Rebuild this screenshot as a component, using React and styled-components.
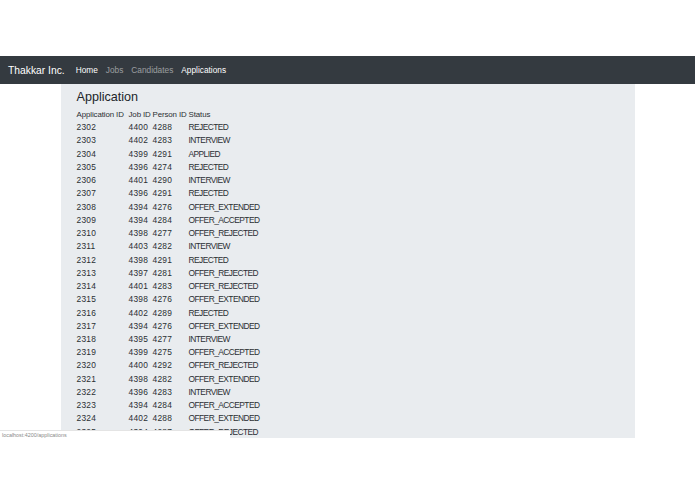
import React from "react";
import styled, { createGlobalStyle } from "styled-components";

const Global = createGlobalStyle`
  html, body { margin: 0; padding: 0; background: #fff; }
  body { font-family: "Liberation Sans", Arial, sans-serif; color: #212529; }
`;

const Page = styled.div`
  position: relative;
  width: 695px;
  height: 494px;
  padding-top: 56px;
  box-sizing: border-box;
  overflow: hidden;
`;

const NavBar = styled.nav`
  height: 28px;
  background: #343a40;
  display: flex;
  align-items: center;
  padding-left: 8px;
`;

const Brand = styled.span`
  color: #fff;
  font-size: 10.3px;
  margin-right: 7px;
`;

const NavLink = styled.span`
  font-size: 8.3px;
  padding: 0 4px;
  color: ${(p) => (p.$muted ? "rgba(255,255,255,0.5)" : "#fff")};
`;

const Panel = styled.main`
  width: 574px;
  height: 354px;
  margin: 0 auto;
  background: #e9ecef;
  padding: 4px 16px 0;
  box-sizing: border-box;
  overflow: hidden;
`;

const Heading = styled.h3`
  margin: 0 0 1px;
  font-size: 12.6px;
  font-weight: 400;
  line-height: 19px;
  color: #212529;
`;

const Grid = styled.div`
  display: grid;
  grid-template-columns: 52px 24px 36px auto;
  font-size: 8.4px;
  line-height: 13.23px;
  color: #2b2f33;
`;

const Cell = styled.div`
  white-space: nowrap;
  letter-spacing: ${(p) => (p.$caps ? "-0.55px" : "0.25px")};
`;

const HeadCell = styled(Cell)`
  font-size: 7.9px;
  letter-spacing: -0.1px;
`;

const StatusBar = styled.div`
  position: absolute;
  left: 0;
  top: 430px;
  width: 230px;
  height: 12px;
  background: #fff;
  border-top: 1px solid #e4e4e4;
  box-sizing: border-box;
  padding-left: 2px;
  font-size: 5.4px;
  line-height: 8px;
  color: #8a8a8a;
`;

const rows = [
  [2302, 4400, 4288, "REJECTED"],
  [2303, 4402, 4283, "INTERVIEW"],
  [2304, 4399, 4291, "APPLIED"],
  [2305, 4396, 4274, "REJECTED"],
  [2306, 4401, 4290, "INTERVIEW"],
  [2307, 4396, 4291, "REJECTED"],
  [2308, 4394, 4276, "OFFER_EXTENDED"],
  [2309, 4394, 4284, "OFFER_ACCEPTED"],
  [2310, 4398, 4277, "OFFER_REJECTED"],
  [2311, 4403, 4282, "INTERVIEW"],
  [2312, 4398, 4291, "REJECTED"],
  [2313, 4397, 4281, "OFFER_REJECTED"],
  [2314, 4401, 4283, "OFFER_REJECTED"],
  [2315, 4398, 4276, "OFFER_EXTENDED"],
  [2316, 4402, 4289, "REJECTED"],
  [2317, 4394, 4276, "OFFER_EXTENDED"],
  [2318, 4395, 4277, "INTERVIEW"],
  [2319, 4399, 4275, "OFFER_ACCEPTED"],
  [2320, 4400, 4292, "OFFER_REJECTED"],
  [2321, 4398, 4282, "OFFER_EXTENDED"],
  [2322, 4396, 4283, "INTERVIEW"],
  [2323, 4394, 4284, "OFFER_ACCEPTED"],
  [2324, 4402, 4288, "OFFER_EXTENDED"],
  [2325, 4394, 4287, "OFFER_REJECTED"],
];

export default function App() {
  return (
    <Page>
      <Global />
      <NavBar>
        <Brand>Thakkar Inc.</Brand>
        <NavLink>Home</NavLink>
        <NavLink $muted>Jobs</NavLink>
        <NavLink $muted>Candidates</NavLink>
        <NavLink>Applications</NavLink>
      </NavBar>
      <Panel>
        <Heading>Application</Heading>
        <Grid>
          <HeadCell>Application ID</HeadCell>
          <HeadCell>Job ID</HeadCell>
          <HeadCell>Person ID</HeadCell>
          <HeadCell>Status</HeadCell>
          {rows.map((r) => (
            <React.Fragment key={r[0]}>
              <Cell>{r[0]}</Cell>
              <Cell>{r[1]}</Cell>
              <Cell>{r[2]}</Cell>
              <Cell $caps>{r[3]}</Cell>
            </React.Fragment>
          ))}
        </Grid>
      </Panel>
      <StatusBar>localhost:4200/applications</StatusBar>
    </Page>
  );
}
